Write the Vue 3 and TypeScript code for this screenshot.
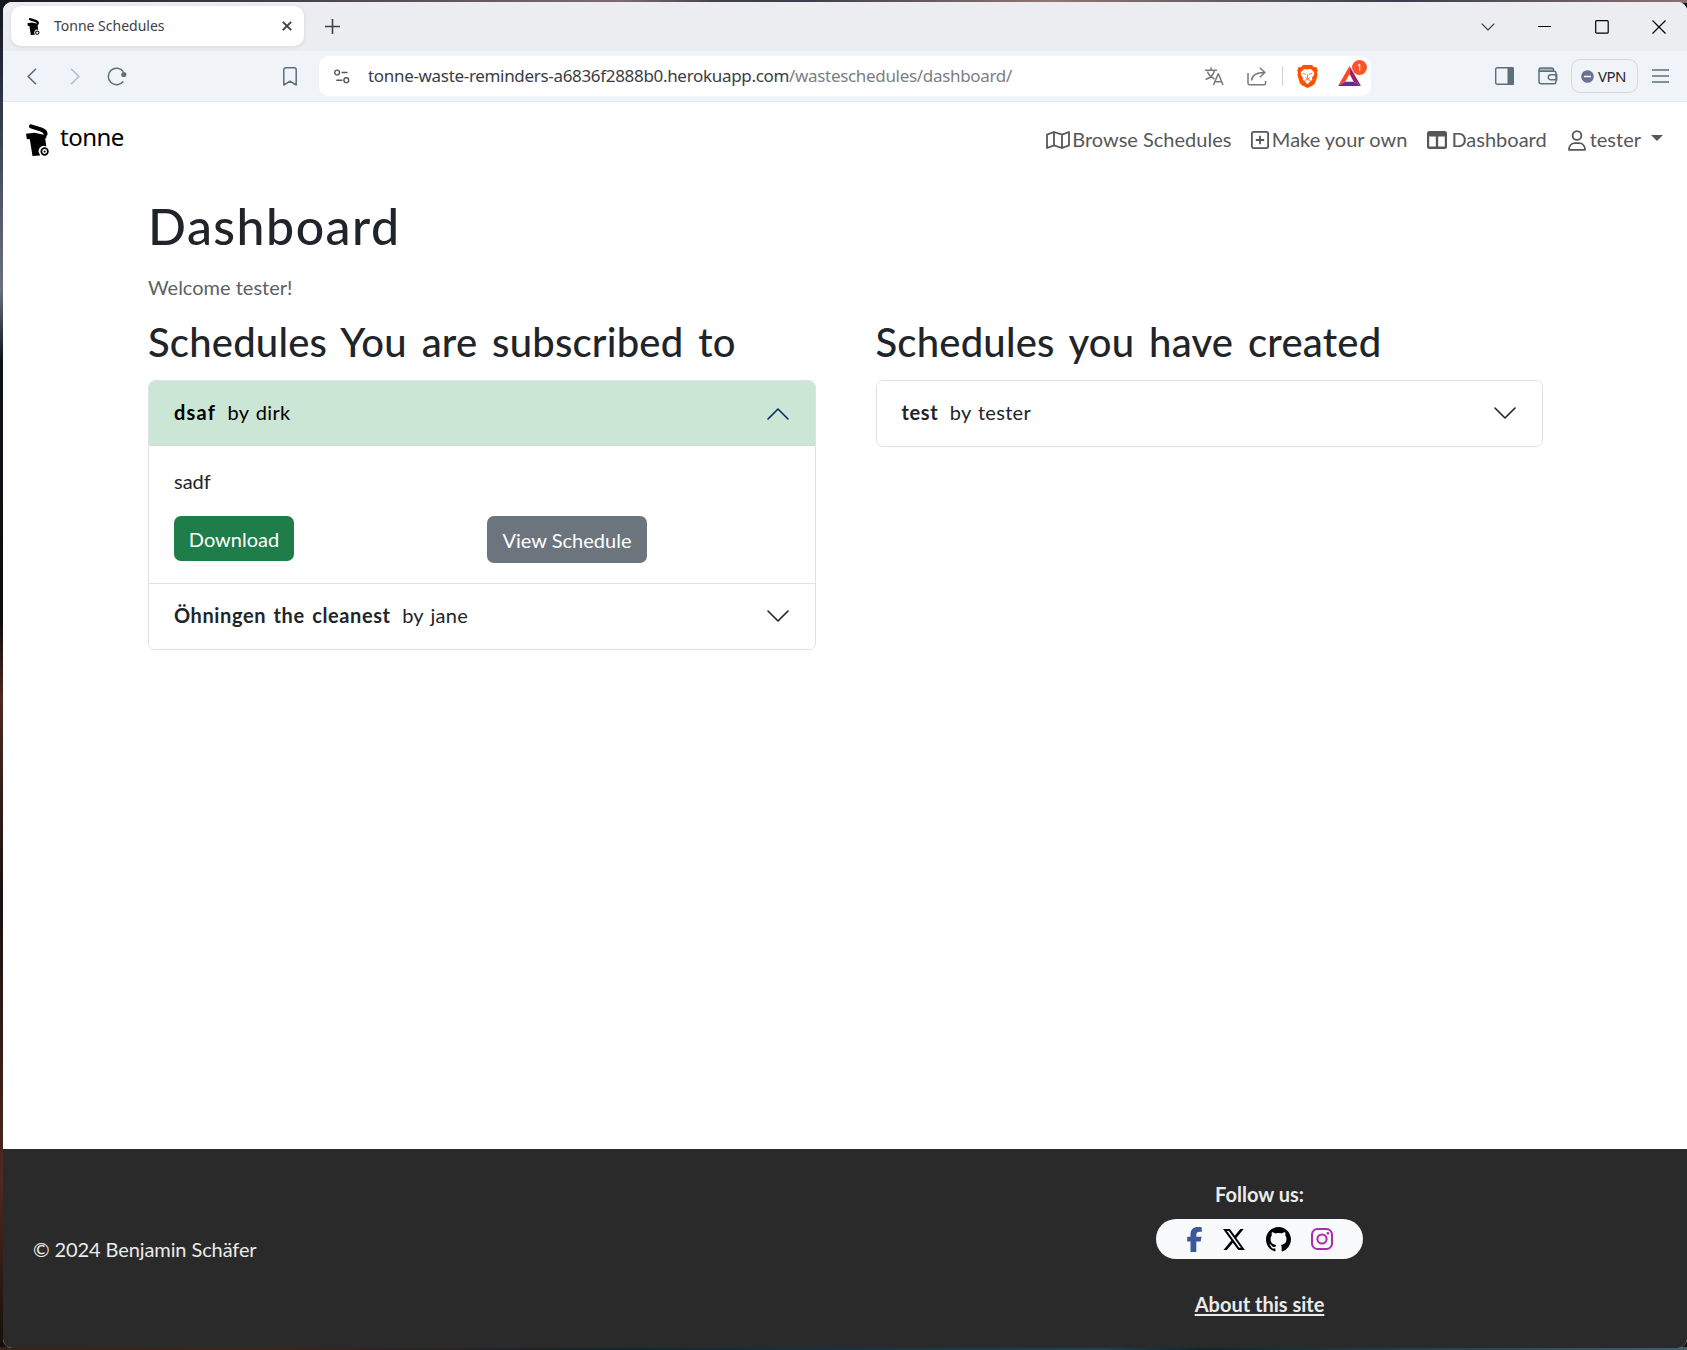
<script setup lang="ts">
import { ref } from 'vue'

interface Schedule { name: string; author: string; open: boolean; description?: string }

const subscribed = ref<Schedule[]>([
  { name: 'dsaf', author: 'dirk', open: true, description: 'sadf' },
  { name: 'Öhningen the cleanest', author: 'jane', open: false },
])
const created = ref<Schedule[]>([{ name: 'test', author: 'tester', open: false }])

const columns = [
  { title: 'Schedules You are subscribed to', list: subscribed },
  { title: 'Schedules you have created', list: created },
]
</script>

<template>
  <div class="desktop">
    <div class="window">
      <div class="tabstrip">
        <div class="tab">
          <svg class="favicon" width="13" height="17" viewBox="0 0 23 32"><path d="M5 2.300L15 5.500Q19.500 7 19.600 10" fill="none" stroke="#000" stroke-width="4.400" stroke-linecap="round" /><path d="M0 9.800L8.500 8.700 19 11l1.500.5-.3 2.800h-1l1.100 8.300a5.200 5.200 0 0 0-6.600 7.700l.3 1.200-7.500.5L3.800 15.200.8 15z" /><circle cx="18.600" cy="27.500" r="3.200" fill="#fff" stroke="#000" stroke-width="1.900" /></svg>
          <span class="tab-title">Tonne Schedules</span>
          <svg class="tab-close" width="10" height="10" viewBox="0 0 10 10"><path d="M.8.8l8.400 8.400M9.200.8L.8 9.200" stroke="#3f4045" stroke-width="1.900" /></svg>
        </div>
        <svg class="new-tab" width="15" height="15" viewBox="0 0 15 15"><path d="M7.500 0v15M0 7.500h15" stroke="#3f4045" stroke-width="1.600" /></svg>
        <div class="controls">
          <svg width="14" height="8" viewBox="0 0 14 8"><path d="M.7.7L7 7 13.300.7" fill="none" stroke="#333" stroke-width="1.100" /></svg>
          <svg width="13" height="13" viewBox="0 0 13 13"><path d="M0 6.500h13" stroke="#000" /></svg>
          <svg width="14" height="14" viewBox="0 0 14 14"><rect x=".7" y=".7" width="12.500" height="12.500" rx="1" fill="none" stroke="#000" stroke-width="1.200" /></svg>
          <svg width="14" height="14" viewBox="0 0 14 14"><path d="M.5.5l13 13M13.500.5l-13 13" stroke="#000" stroke-width="1.200" /></svg>
        </div>
      </div>

      <div class="toolbar">
        <svg class="back" width="10" height="17" viewBox="0 0 10 17"><path d="M9 .7L1.200 8.500 9 16.300" fill="none" stroke="#5b7079" stroke-width="1.600" /></svg>
        <svg class="fwd" width="10" height="17" viewBox="0 0 10 17"><path d="M1 .7l7.800 7.800L1 16.300" fill="none" stroke="#b5bfc6" stroke-width="1.600" /></svg>
        <svg class="reload" width="20" height="19" viewBox="0 0 20 19"><path d="M16.200 14.500a8.300 8.300 0 1 1 .2-9.800" fill="none" stroke="#5b7079" stroke-width="1.500" /><circle cx="16.800" cy="7.500" r="2.600" fill="#5b7079" /></svg>
        <svg class="bookmark" width="14" height="19" viewBox="0 0 14 19"><path d="M.8 2.800a2 2 0 0 1 2-2h8.400a2 2 0 0 1 2 2v15.200L7 14.200.8 18z" fill="none" stroke="#5b7079" stroke-width="1.500" stroke-linejoin="round" /></svg>
        <div class="url">
          <svg class="site" width="16" height="15" viewBox="0 0 16 15"><g fill="none" stroke="#56595e" stroke-width="1.400"><circle cx="3.100" cy="3.500" r="2.400" /><path d="M7.500 3.500H13.500M2.200 11.200H8.500" /><circle cx="12.300" cy="11.200" r="2.400" /></g></svg>
          <div class="address"><span class="host">tonne-waste-reminders-a6836f2888b0.herokuapp.com</span><span class="path">/wasteschedules/dashboard/</span></div>
          <svg class="translate" width="19" height="19" viewBox="0 0 19 19"><g fill="none" stroke="#76797d" stroke-width="1.500"><path d="M0 3.300h12M6 .5v3M2.500 4.500c1 3.500 4 6 7 7.500M9.500 3.500c-1 4.500-4.500 7.500-9 9M8.500 18l4.600-11h.4L18 18M10 14.700h6.700" /></g></svg>
          <svg class="share" width="20" height="19" viewBox="0 0 20 19"><g fill="none" stroke="#76797d" stroke-width="1.500"><path d="M1 6v10.200c0 1 .6 1.600 1.600 1.600H17c1 0 1.600-.6 1.600-1.600V14M4.500 13.500c.5-5 4.500-8 13-8M12.800.8l5 4.700-5 4.700" /></g></svg>
          <i class="rule"></i>
          <svg class="lion" width="21" height="23" viewBox="0 0 21 23"><path d="M6 0h9l2 2.200 2.300-.2 1.500 3.400-.8 2 .6 2.300-2.400 8.200-2 2.400L10.500 23l-5.700-2.700-2-2.400L.4 9.700 1 7.400l-.8-2L1.700 2 4 2.200z" fill="#ff5000" /><path d="M7 3.900l3.500.6 3.500-.6 3.300 3.700-.6 2.800-1.700 2.100.3 2.300-2.300 1.700-2.500 3-2.500-3-2.300-1.700.3-2.300-1.700-2.100-.6-2.800z" fill="#fff" /><path d="M5.700 8.300l3.500 1.200M15.300 8.300l-3.500 1.200M10.500 9.500v4M8.500 12.700l2 1.600 2-1.600M7.700 15.600l2.800-1.100 2.800 1.100" fill="none" stroke="#ff6a2a" stroke-width=".9" /></svg>
          <div class="bat">
            <svg width="23" height="20" viewBox="0 0 23 20"><path d="M11.500 0L0 20l7.300-4.200L11.500 8z" fill="#ff4724" /><path d="M11.500 0L23 20l-7.300-4.200L11.500 8z" fill="#9e1f63" /><path d="M0 20h23l-7.300-4.200H7.300z" fill="#662d91" /></svg>
            <span class="badge">1</span>
          </div>
        </div>
        <svg class="sidebar" width="19" height="18" viewBox="0 0 19 18"><rect x=".7" y=".7" width="17.600" height="16.600" rx="1.500" fill="none" stroke="#5b7079" stroke-width="1.400" /><path d="M12.500 0h5A1.500 1.500 0 0 1 19 1.500v15a1.500 1.500 0 0 1-1.500 1.500h-5z" fill="#5b7079" /></svg>
        <svg class="wallet" width="20" height="18" viewBox="0 0 20 18"><path d="M1 2.500C1 1.400 1.700.9 2.800.9h10.700c1.400 0 2.200.8 2.200 2.500v.8H2.500C1.500 4.200 1 3.500 1 2.500z" fill="#a9b6bc" /><g fill="none" stroke="#5b7079" stroke-width="1.500"><path d="M1 3v11.500c0 1.400.9 2.300 2.300 2.300h12.400c1.300 0 2.300-.9 2.300-2.300V6.200c0-1.200-.8-2-2-2H2.800C.3 4.200.5.900 2.800.9h10.700c1.400 0 2.200.8 2.200 2.500M18.700 7.800h-5.900a2.500 2.500 0 0 0 0 5h5.900z" /></g></svg>
        <div class="vpn"><svg width="13" height="13" viewBox="0 0 13 13"><circle cx="6.500" cy="6.500" r="6.300" fill="#6b7094" /><path d="M3 6.500h7" stroke="#fff" stroke-width="1.700" /></svg><span>VPN</span></div>
        <svg class="menu" width="17" height="14" viewBox="0 0 17 14"><path d="M0 1h17M0 7h17M0 13h17" stroke="#5b7079" stroke-width="1.500" /></svg>
      </div>

      <div class="page">
        <nav>
          <svg class="logo" width="23" height="32" viewBox="0 0 23 32"><path d="M5 2.300L15 5.500Q19.500 7 19.600 10" fill="none" stroke="#000" stroke-width="4" stroke-linecap="round" /><path d="M0 9.800L8.500 8.700 19 11l1.500.5-.3 2.800h-1l1.100 8.300a5.200 5.200 0 0 0-6.600 7.700l.3 1.200-7.500.5L3.800 15.200.8 15z" /><circle cx="18.600" cy="27.500" r="3.300" fill="#fff" stroke="#000" stroke-width="1.700" /><circle cx="18.600" cy="27.500" r="1.100" /></svg>
          <span class="brand">tonne</span>
          <div class="links">
            <a class="l1"><svg width="24" height="18" viewBox="0 0 24 18"><path d="M1 3.600L8 1l8 2.700L23 1v13.400L16 17l-8-2.700L1 17zM8 1v13.300M16 3.700V17" fill="none" stroke="#575757" stroke-width="1.800" stroke-linejoin="round" /></svg><span>Browse Schedules</span></a>
            <a class="l2"><svg width="18" height="18" viewBox="0 0 18 18"><rect x=".9" y=".9" width="16.200" height="16.200" rx="1.800" fill="none" stroke="#575757" stroke-width="1.800" /><path d="M9 4.800v8.400M4.800 9h8.400" stroke="#575757" stroke-width="1.800" /></svg><span>Make your own</span></a>
            <a class="l3"><svg width="20" height="18" viewBox="0 0 20 18"><path fill-rule="evenodd" d="M2.500 0h15A2.500 2.500 0 0 1 20 2.500v13a2.500 2.500 0 0 1-2.500 2.500h-15A2.500 2.500 0 0 1 0 15.500v-13A2.500 2.500 0 0 1 2.500 0zM2.200 5.500V15.600H8.800V5.500zM11.200 5.500V15.600H17.800V5.500z" fill="#575757" /></svg><span>Dashboard</span></a>
            <a class="l4"><svg width="18" height="21" viewBox="0 0 18 21"><g fill="none" stroke="#575757" stroke-width="1.800"><circle cx="9" cy="5.500" r="4.400" /><path d="M1 19.800c0-4 2.400-6.600 6-6.600h4c3.600 0 6 2.600 6 6.600z" stroke-linejoin="round" /></g></svg><span>tester</span><i class="caret"></i></a>
          </div>
        </nav>

        <main>
          <h1>Dashboard</h1>
          <p class="welcome">Welcome tester!</p>
          <div class="cols">
            <section v-for="col in columns" :key="col.title">
              <h2>{{ col.title }}</h2>
              <div class="accordion">
                <div v-for="s in col.list.value" :key="s.name" class="item">
                  <button class="head" :class="{ open: s.open }" @click="s.open = !s.open">
                    <strong>{{ s.name }}</strong><span class="by">by {{ s.author }}</span>
                    <svg width="22" height="12" viewBox="0 0 22 12"><path d="M1 1l10 10L21 1" fill="none" :stroke="s.open ? '#052c65' : '#212529'" stroke-width="1.600" stroke-linecap="round" stroke-linejoin="round" /></svg>
                  </button>
                  <div v-if="s.open" class="body">
                    <p>{{ s.description }}</p>
                    <div class="actions"><button class="download">Download</button><button class="view">View Schedule</button></div>
                  </div>
                </div>
              </div>
            </section>
          </div>
        </main>

        <footer>
          <p class="copy">© 2024 Benjamin Schäfer</p>
          <div class="social">
            <p class="follow">Follow us:</p>
            <div class="pill">
              <svg class="fb" width="15" height="25" viewBox="10 0 300 512" preserveAspectRatio="none"><path fill="#3b5998" d="M80 299.3V512H196V299.3h86.500l18-97.800H196V166.900c0-51.700 20.300-71.500 72.700-71.500c16.300 0 29.400 .4 37 1.200V7.900C291.400 4 256.400 0 236.200 0C129.300 0 80 50.500 80 159.400v42.100H14v97.800H80z" /></svg>
              <svg class="tw" width="22" height="21" viewBox="26 48 462 416" preserveAspectRatio="none"><path d="M389.200 48h70.600L305.600 224.200 487 464H345L233.700 318.600 106.500 464H35.800L200.700 275.500 26.800 48H172.400L272.900 180.900 389.200 48zM364.400 421.800h39.100L151.100 88h-42L364.400 421.800z" /></svg>
              <svg class="gh" width="25" height="25" viewBox="0 0 16 16"><path d="M8 0C3.580 0 0 3.580 0 8c0 3.540 2.290 6.530 5.470 7.590.4.07.55-.17.55-.38 0-.19-.01-.82-.01-1.490-2.010.37-2.530-.49-2.690-.94-.09-.23-.48-.94-.82-1.130-.28-.15-.68-.52-.01-.53.63-.01 1.080.58 1.230.82.72 1.210 1.870.87 2.330.66.07-.52.28-.87.51-1.070-1.780-.2-3.640-.89-3.640-3.950 0-.87.31-1.590.82-2.150-.08-.2-.36-1.020.08-2.120 0 0 .67-.21 2.200.82.64-.18 1.320-.27 2-.27s1.360.09 2 .27c1.530-1.040 2.200-.82 2.200-.82.44 1.100.16 1.920.08 2.120.51.56.82 1.270.82 2.150 0 3.070-1.870 3.750-3.650 3.950.29.25.54.73.54 1.480 0 1.070-.01 1.930-.01 2.200 0 .21.15.46.55.38A8.010 8.010 0 0 0 16 8c0-4.420-3.580-8-8-8z" /></svg>
              <svg class="ig" width="22" height="22" viewBox="0 0 22 22"><g fill="none" stroke="#ac2bac" stroke-width="2"><rect x="1" y="1" width="20" height="20" rx="5.500" /><circle cx="11" cy="11" r="4.600" /></g><circle cx="16.900" cy="5.200" r="1.300" fill="#ac2bac" /></svg>
            </div>
            <p class="about"><a>About this site</a></p>
          </div>
        </footer>
      </div>
    </div>
  </div>
</template>

<style>
body { margin: 0; overflow: hidden; }
</style>

<style scoped>
* { box-sizing: border-box; }
p, h1, h2 { margin: 0; }
button { font: inherit; border: 0; margin: 0; padding: 0; text-align: left; }
svg { display: block; flex: none; }
span, strong, a, h1, h2, p { white-space: nowrap; }
.desktop {
  width: 1687px; height: 1350px; padding: 2px 0 2px 3px;
  background: linear-gradient(90deg, #12161f 0, #2b2b38 120px, #7d6a70 620px, #443f4b 720px, #3d3b49 800px, #8f7772 1050px, #3a3e4b 1400px, #8b7170 1687px) top / 100% 3px no-repeat,
    linear-gradient(90deg, #3a2119, #40231a 260px, #14242b 600px, #1c4452 1100px, #14242b 1200px, #40606a) bottom / 100% 3px no-repeat,
    linear-gradient(#10141d 0, #4b5063 180px, #6d7080 290px, #10131a 360px, #0e0d10 620px, #4d2a20 700px, #181012 900px, #50291e 1180px, #160e0d);
}
.window { height: 1346px; display: flex; flex-direction: column; border-radius: 9px; overflow: hidden; background: #fff; font-family: "Noto Sans", sans-serif; }
.tabstrip { height: 49px; flex: none; background: #ecedf1; display: flex; align-items: center; padding-left: 8px; }
.tab { width: 293px; height: 40px; margin-top: -1px; border-radius: 10px; background: #fff; box-shadow: 0 1px 4px rgba(60, 64, 80, .12); display: flex; align-items: center; padding: 0 12px 0 16px; }
.tab-title { margin-left: 14px; font-size: 14px; line-height: 20px; color: #3d3e43; }
.tab-close { margin-left: auto; }
.new-tab { margin-left: 21px; }
.controls { margin-left: auto; display: flex; align-items: center; padding-right: 21px; gap: 43.500px; }
.toolbar { height: 51px; flex: none; background: #f0f4f8; border-bottom: 1px solid #e4e9ee; display: flex; align-items: center; padding-left: 24px; }
.fwd { margin-left: 33px; }
.reload { margin-left: 27px; }
.bookmark { margin-left: 156px; }
.url { width: 1052px; height: 40px; margin-left: 22px; border-radius: 10px; background: #fff; display: flex; align-items: center; padding-left: 15px; }
.address { margin-left: 18px; width: 837px; font-size: 17px; line-height: 24px; letter-spacing: -.32px; display: flex; }
.host { color: #3b3d42; }
.path { color: #7b7e83; }
.share { margin-left: 23px; }
.rule { width: 1px; height: 20px; margin-left: 15px; background: #cfd1d4; }
.lion { margin-left: 14px; }
.bat { margin-left: 20px; position: relative; }
.badge { position: absolute; left: 14px; top: -6px; width: 15px; height: 15px; border-radius: 8px; background: #fb542b; color: #fff; font-size: 9px; line-height: 15px; text-align: center; }
.sidebar { margin-left: 124px; }
.wallet { margin-left: 24px; }
.vpn { margin-left: 13px; width: 67px; height: 34px; border: 1px solid #d5dadf; border-radius: 9px; display: flex; align-items: center; padding-left: 9px; font-size: 15px; color: #26272b; }
.vpn span { margin-left: 4px; letter-spacing: -.5px; }
.menu { margin-left: 14px; }
.page { flex: 1; display: flex; flex-direction: column; font-family: Lato, sans-serif; font-size: 20px; line-height: 30px; color: #212529; }
nav { height: 76px; display: flex; align-items: center; padding: 0 24px 0 23px; }
.brand { font-family: "Noto Sans", sans-serif; font-size: 24px; letter-spacing: -.5px; margin: -6px 0 0 11px; color: #000; }
.links { margin-left: auto; display: flex; color: #575757; }
.links a { display: flex; align-items: center; }
.links a span { margin-top: -2px; }
.l1 span { margin-left: 2px; }
.l2 { margin-left: 20px; }
.l2 span { margin-left: 2.500px; }
.l3 { margin-left: 20px; }
.l3 span { margin-left: 4px; }
.l4 { margin-left: 21px; }
.l4 span { margin-left: 4px; }
.caret { margin: -4px 0 0 10px; border: 6px solid transparent; border-top-color: #575757; border-bottom: 0; }
main { flex: 1; padding: 18px 144px 0 145px; }
h1 { font-size: 50px; line-height: 60px; font-weight: 500; letter-spacing: 1.500px; }
.welcome { margin-top: 16px; color: #5c6166; }
.cols { margin-top: 16px; display: flex; gap: 60px; }
section { flex: 1; }
h2 { font-size: 40px; line-height: 48px; font-weight: 500; letter-spacing: .2px; word-spacing: 4.500px; }
.accordion { margin-top: 14px; border: 1px solid #dee2e6; border-radius: 7px; overflow: hidden; }
.item + .item { border-top: 1px solid #dee2e6; }
.head { width: 100%; height: 65px; padding: 0 26px 4px 25px; display: flex; align-items: center; background: #fff; color: #212529; }
.head strong { letter-spacing: .6px; word-spacing: 2px; }
.head.open { padding-bottom: 2px; background: #cbe6d4; border-bottom: 1px solid #d3dcd8; color: #000; }
.head.open strong { letter-spacing: 1.200px; }
.head svg { margin: 3px 0 0 auto; }
.head.open svg { transform: rotate(180deg); }
.by { margin-left: 11.500px; letter-spacing: .3px; word-spacing: 1.500px; }
.body { height: 137px; padding: 20px 25px 0; }
.actions { margin-top: 20px; display: flex; align-items: flex-start; }
.actions button { border-radius: 7px; color: #fff; text-align: center; }
.download { width: 120px; height: 45px; background: #1e7d48; padding-bottom: 0; }
.view { width: 160px; height: 47px; margin-left: 193px; background: #6c757d; padding-top: 1px; }
footer { height: 199px; background: #2a2a2a; color: #ebebeb; display: flex; padding-left: 30px; }
.copy { margin-top: 85px; letter-spacing: -.1px; }
.social { width: 207px; margin: 30px 324px 0 auto; text-align: center; font-weight: 700; }
.pill { margin-top: 10px; height: 40px; border-radius: 20px; background: #f8f9fa; display: flex; align-items: center; padding-left: 31px; }
.tw { margin-left: 21px; }
.gh { margin-left: 21px; }
.ig { margin-left: 20px; }
.about { margin-top: 30px; }
.about a { text-decoration: underline; text-underline-offset: 2px; }
</style>
